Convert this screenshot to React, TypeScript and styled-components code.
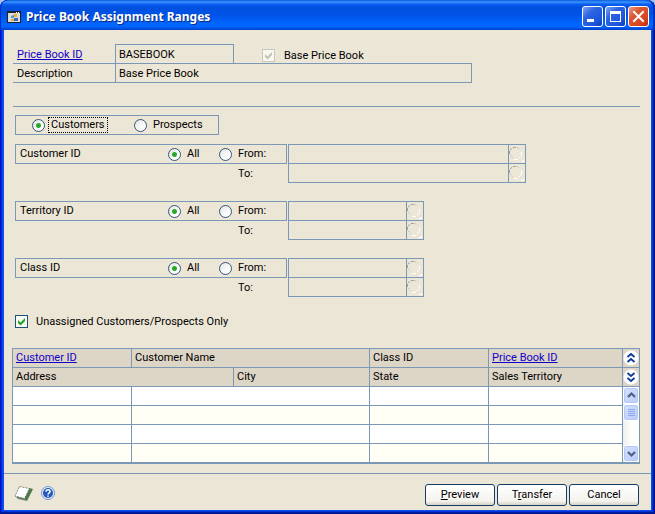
import React from "react";
import styled, { createGlobalStyle, css } from "styled-components";

const face = "#ece6d6";
const line = "#7b98b6";
const head = "#ddd5c6";

const GlobalStyle = createGlobalStyle`
  *, *::before, *::after { box-sizing: border-box; }
  body { margin: 0; background: #a9c2f3; }
  body, button, input { font-family: Roboto, "Liberation Sans", sans-serif; font-size: 11px; color: #000; }
`;

const Window = styled.main`
  display: flex;
  flex-direction: column;
  min-height: 100vh;
  padding: 0 4px 4px;
  border-radius: 8px 8px 0 0;
  background: #0b4fe6;
  box-shadow: inset -1px -1px #00138c, inset 1px 0 #0010c8, inset -2px -2px #001ea0,
    inset 2px 0 #0428dc, inset -3px -3px #0432e0, inset 3px 0 #0a48ea;
  overflow: hidden;
`;

const TitleBar = styled.header`
  display: flex;
  align-items: center;
  height: 30px;
  margin: 0 -4px;
  padding: 3px 6px 0 7px;
  border-radius: 8px 8px 0 0;
  background: linear-gradient(180deg, #0a5bdc 0, #3a94ff 7%, #0a5ff0 14%, #0050e0 24%, #0053e6 50%, #0066ff 80%, #0066ff 88%, #0040c8 100%);
  box-shadow: inset 1px 0 #0030d0, inset -2px 0 #0030c0;
`;

const Title = styled.h1`
  flex: 1;
  margin: 0 0 0 5px;
  color: #fff;
  font: bold 12px/18px "Noto Sans", sans-serif;
  text-shadow: 1px 1px #0a2a80;
  white-space: nowrap;
`;

const Captions = styled.div`
  display: flex;
  gap: 2px;
`;

const CaptionButton = styled.button<{ $close?: boolean }>`
  width: 21px;
  height: 21px;
  padding: 0;
  border: 1px solid #fff;
  border-radius: 3px;
  background: ${(p) =>
    p.$close
      ? "linear-gradient(135deg, #ee9a80, #dc5530 35%, #d8431c 75%, #b83010)"
      : "linear-gradient(135deg, #7ea6f4, #2c64e0 35%, #1c56dc 75%, #0c3cb8)"};
  svg { display: block; }
`;

const Content = styled.div`
  display: flex;
  flex: 1;
  flex-direction: column;
  background: ${face};
`;

const Form = styled.form`
  flex: 1;
  padding: 14px 11px 9px 8px;
`;

const HeaderRow = styled.div`
  display: flex;
  height: 19px;
  margin-left: 1px;
  &:last-of-type { height: 20px; }
`;

const labelCell = css`
  width: 102px;
  padding-left: 4px;
  border-bottom: 1px solid ${line};
  line-height: 21px;
`;

const HeaderLabel = styled.label`
  ${labelCell}
`;

const LinkLabel = styled.span`
  ${labelCell}
  border-bottom: 0;
  box-shadow: 0 1px ${line};
`;

const Link = styled.a`
  color: #1200c8;
  text-decoration: underline;
`;

const Field = styled.input<{ $wide?: boolean }>`
  width: ${(p) => (p.$wide ? "357px" : "119px")};
  padding: 0 3px;
  border: 1px solid ${line};
  border-bottom-width: ${(p) => (p.$wide ? "1px" : "0")};
  border-radius: 0;
  background: transparent;
  outline: 0;
`;

const CheckLabel = styled.label<{ $gap: number }>`
  display: inline-flex;
  align-items: center;
  gap: ${(p) => p.$gap}px;
  height: 14px;
`;

const BaseCheck = styled(CheckLabel)`
  height: 22px;
  margin-left: 28px;
`;

const checkMark = (c: string) =>
  `url("data:image/svg+xml,%3Csvg xmlns='http://www.w3.org/2000/svg' viewBox='0 0 11 11'%3E%3Cpath d='M2 4v3l2.5 2.5L9 5V2L4.500 6.500z' fill='%23${c}'/%3E%3C/svg%3E")`;

const CheckBox = styled.input`
  appearance: none;
  width: 13px;
  height: 13px;
  margin: 0;
  border: 1px solid #1d4f80;
  background: #f8f8f4 ${checkMark("21a121")} center / 11px 11px no-repeat;
  &:not(:checked) { background-image: none; }
  &:disabled {
    border-color: #c9c7ba;
    background: #f8f7f0 ${checkMark("c4c2b4")} center / 11px 11px no-repeat;
  }
`;

const Separator = styled.hr`
  height: 1px;
  margin: 23px 0 8px 1px;
  border: 0;
  background: ${line};
`;

const RadioBox = styled.div`
  display: flex;
  align-items: center;
  width: 204px;
  height: 20px;
  margin: 0 0 9px 3px;
  padding-left: 16px;
  border: 1px solid ${line};
`;

const RadioLabel = styled.label<{ $width: number }>`
  display: flex;
  align-items: center;
  gap: 3px;
  width: ${(p) => p.$width}px;
`;

const Radio = styled.input`
  appearance: none;
  width: 13px;
  height: 13px;
  margin: 0;
  border: 1px solid #35557c;
  border-radius: 50%;
  background: linear-gradient(135deg, #e2e2dc, #fff 70%);
  outline: 0;
  &:checked {
    background: radial-gradient(circle, #21a121 0, #2cab2c 2px, transparent 3px), linear-gradient(135deg, #e2e2dc, #fff 70%);
  }
`;

const RadioText = styled.span<{ $focus?: boolean }>`
  height: 16px;
  padding: 0 2px;
  border: 1px dotted ${(p) => (p.$focus ? "#000" : "transparent")};
  line-height: 14px;
  white-space: nowrap;
`;

const Range = styled.fieldset`
  display: flex;
  gap: 1px;
  margin: 0 0 18px 3px;
  padding: 0;
  border: 0;
  min-width: 0;
`;

const RangeLeft = styled.div`
  width: 272px;
`;

const RangeHead = styled.div`
  display: flex;
  align-items: center;
  height: 20px;
  padding-left: 4px;
  border: 1px solid ${line};
`;

const RangeName = styled.span`
  width: 148px;
  line-height: 18px;
`;

const ToLabel = styled.label`
  display: block;
  padding-left: 223px;
  line-height: 19px;
`;

const RangeFields = styled.div<{ $long?: boolean }>`
  width: ${(p) => (p.$long ? "238px" : "136px")};
  border: 1px solid ${line};
`;

const RangeRow = styled.div`
  display: flex;
  height: 18px;
  & + & {
    height: 19px;
    border-top: 1px solid ${line};
  }
`;

const RangeInput = styled.input`
  flex: 1;
  min-width: 0;
  padding: 0 3px;
  border: 0;
  background: transparent;
`;

const Lookup = styled.button`
  width: 17px;
  padding: 0;
  border: 0;
  border-left: 1px solid ${line};
  background: transparent;
  svg { display: block; }
`;

const Unassigned = styled.div`
  display: flex;
  margin: -1px 0 20px 3px;
`;

const Table = styled.table`
  width: 100%;
  border-collapse: collapse;
  table-layout: fixed;
  border-bottom: 2px solid ${line};
`;

const Col = styled.col<{ $w?: number }>`
  width: ${(p) => (p.$w ? `${p.$w}px` : "auto")};
`;

const Th = styled.th`
  height: 19px;
  padding: 0 3px;
  border: 1px solid ${line};
  background: ${head};
  font-weight: normal;
  line-height: 18px;
  text-align: left;
  white-space: nowrap;
`;

const ToolTh = styled(Th)`
  padding: 0;
`;

const BodyRow = styled.tr`
  background: #fff;
  &:nth-child(even) { background: #fffff5; }
`;

const Td = styled.td`
  height: 19px;
  padding: 0;
  border: 1px solid ${line};
`;

const Scroll = styled.div`
  display: flex;
  flex-direction: column;
  height: 75px;
  background: linear-gradient(90deg, #eeedf0, #fefefb 50%);
`;

const IconButton = styled.button`
  display: block;
  width: 100%;
  height: 18px;
  padding: 0;
  border: 0;
  background: transparent;
  svg { display: block; margin: auto; }
`;

const ScrollButton = styled(IconButton)`
  height: 17px;
  border: 1px solid #fff;
  border-radius: 3px;
  background: linear-gradient(135deg, #d5e1fd, #b8ccf8);
  box-shadow: inset 0 0 0 1px #b5c8f5;
  &:last-child { margin-top: auto; }
`;

const Footer = styled.footer`
  display: flex;
  align-items: flex-start;
  padding: 10px 12px 4px 10px;
  border-top: 1px solid ${line};
`;

const FooterIcons = styled.div`
  display: flex;
  flex: 1;
  gap: 7px;
`;

const SmallTool = styled.button`
  width: 20px;
  height: 18px;
  padding: 0;
  border: 0;
  background: transparent;
  svg { display: block; }
`;

const Actions = styled.div`
  display: flex;
  gap: 2px;
`;

const Action = styled.button`
  width: 70px;
  height: 22px;
  padding: 0;
  border: 1px solid #123c66;
  border-radius: 3px;
  background: linear-gradient(#fff, #f4f3ee 80%, #d8d2c6);
  line-height: 20px;
`;

const LookupIcon = () => (
  <svg width="16" height="18" viewBox="0 0 16 18" fill="none">
    <path d="M.5 9V5.500L4 2.500H8" stroke="#a39f92" strokeDasharray="3 1" />
    <path d="M8 2.500l3 1.500M1.500 10l2 3" stroke="#b0ac9f" strokeDasharray="1 2" />
    <path d="M12.500 7v3.500M5 14.500h4M10 13l2-2M12 16.500h3M14.500 15v2" stroke="#fffef8" />
  </svg>
);

const Chevrons = ({ down }: { down?: boolean }) => (
  <svg width="16" height="18" viewBox="0 0 16 18" fill="none">
    <circle cx="8" cy="9" r="7.500" fill="#fff" />
    <path
      d={down ? "M4.500 5L8 8l3.500-3M4.500 10L8 13l3.500-3" : "M4.500 8L8 5l3.500 3M4.500 13L8 10l3.500 3"}
      stroke="#0c3a9c"
      strokeWidth="1.800"
    />
  </svg>
);

const ranges = [
  { name: "Customer ID", key: "customer", long: true },
  { name: "Territory ID", key: "territory" },
  { name: "Class ID", key: "class" },
];

function RangeGroup({ name, id, long }: { name: string; id: string; long?: boolean }) {
  return (
    <Range aria-label={name}>
      <RangeLeft>
        <RangeHead>
          <RangeName>{name}</RangeName>
          <RadioLabel $width={51}>
            <Radio type="radio" name={id} defaultChecked />
            <RadioText>All</RadioText>
          </RadioLabel>
          <RadioLabel $width={60}>
            <Radio type="radio" name={id} />
            <RadioText>From:</RadioText>
          </RadioLabel>
        </RangeHead>
        <ToLabel htmlFor={`${id}-to`}>To:</ToLabel>
      </RangeLeft>
      <RangeFields $long={long}>
        {["from", "to"].map((end) => (
          <RangeRow key={end}>
            <RangeInput id={`${id}-${end}`} aria-label={`${name} ${end}`} disabled />
            <Lookup type="button" aria-label={`Look up ${name} ${end}`} disabled>
              <LookupIcon />
            </Lookup>
          </RangeRow>
        ))}
      </RangeFields>
    </Range>
  );
}

export default function App() {
  return (
    <>
      <GlobalStyle />
      <Window>
        <TitleBar>
          <svg width="14" height="12" viewBox="0 0 14 12" aria-hidden="true">
            <path fill="#20202c" d="M0 0h14v12H0z" />
            <path fill="#dcdcdc" d="M1 2h12v9H1z" />
            <path fill="#fff" d="M9 1h1v1H9zM11 1h1v1h-1z" />
            <path fill="#4b9ac8" d="M4 5l3-1v3H4z" />
            <path fill="#e4b030" d="M7 3h3v3H7zM4 8h3v2H4z" />
            <path fill="#3b68b0" d="M7 7h4v3H7z" />
          </svg>
          <Title>Price Book Assignment Ranges</Title>
          <Captions>
            <CaptionButton aria-label="Minimize">
              <svg width="19" height="19"><path d="M4 12h7v3H4z" fill="#fff" /></svg>
            </CaptionButton>
            <CaptionButton aria-label="Maximize">
              <svg width="19" height="19"><path d="M4 4h11v11H4zM5 7v7h9V7z" fill="#fff" fillRule="evenodd" /></svg>
            </CaptionButton>
            <CaptionButton $close aria-label="Close">
              <svg width="19" height="19"><path d="M5 5l9 9M14 5l-9 9" stroke="#fff" strokeWidth="2" strokeLinecap="square" /></svg>
            </CaptionButton>
          </Captions>
        </TitleBar>
        <Content>
          <Form>
            <section>
              <HeaderRow>
                <LinkLabel><Link href="#book">Price Book ID</Link></LinkLabel>
                <Field aria-label="Price Book ID" defaultValue="BASEBOOK" readOnly />
                <BaseCheck $gap={9}>
                  <CheckBox type="checkbox" defaultChecked disabled />
                  Base Price Book
                </BaseCheck>
              </HeaderRow>
              <HeaderRow>
                <HeaderLabel htmlFor="description">Description</HeaderLabel>
                <Field id="description" $wide defaultValue="Base Price Book" readOnly />
              </HeaderRow>
            </section>
            <Separator />
            <RadioBox role="radiogroup" aria-label="Assign to">
              <RadioLabel $width={102}>
                <Radio type="radio" name="kind" defaultChecked />
                <RadioText $focus>Customers</RadioText>
              </RadioLabel>
              <RadioLabel $width={80}>
                <Radio type="radio" name="kind" />
                <RadioText>Prospects</RadioText>
              </RadioLabel>
            </RadioBox>
            {ranges.map((r) => (
              <RangeGroup key={r.key} id={r.key} name={r.name} long={r.long} />
            ))}
            <Unassigned>
              <CheckLabel $gap={8}>
                <CheckBox type="checkbox" defaultChecked />
                Unassigned Customers/Prospects Only
              </CheckLabel>
            </Unassigned>
            <Table>
              <colgroup>
                <Col $w={119} />
                <Col $w={102} />
                <Col />
                <Col $w={119} />
                <Col $w={134} />
                <Col $w={17} />
              </colgroup>
              <thead>
                <tr>
                  <Th><Link href="#customer">Customer ID</Link></Th>
                  <Th colSpan={2}>Customer Name</Th>
                  <Th>Class ID</Th>
                  <Th><Link href="#pricebook">Price Book ID</Link></Th>
                  <ToolTh><IconButton type="button" aria-label="Hide details"><Chevrons /></IconButton></ToolTh>
                </tr>
                <tr>
                  <Th colSpan={2}>Address</Th>
                  <Th>City</Th>
                  <Th>State</Th>
                  <Th>Sales Territory</Th>
                  <ToolTh><IconButton type="button" aria-label="Show details"><Chevrons down /></IconButton></ToolTh>
                </tr>
              </thead>
              <tbody>
                {[0, 1, 2, 3].map((row) => (
                  <BodyRow key={row}>
                    <Td />
                    <Td colSpan={2} />
                    <Td />
                    <Td />
                    {row === 0 && (
                      <Td rowSpan={4}>
                        <Scroll>
                          <ScrollButton type="button" aria-label="Scroll up">
                            <svg width="13" height="15" fill="none"><path d="M3 9l3.500-3.500L10 9" stroke="#4d6185" strokeWidth="2.200" /></svg>
                          </ScrollButton>
                          <ScrollButton type="button" aria-label="Scroll thumb">
                            <svg width="13" height="15"><path d="M3 4.500h7M3 6.500h7M3 8.500h7M3 10.500h7" stroke="#8ba9ee" /></svg>
                          </ScrollButton>
                          <ScrollButton type="button" aria-label="Scroll down">
                            <svg width="13" height="15" fill="none"><path d="M3 6l3.500 3.500L10 6" stroke="#4d6185" strokeWidth="2.200" /></svg>
                          </ScrollButton>
                        </Scroll>
                      </Td>
                    )}
                  </BodyRow>
                ))}
              </tbody>
            </Table>
          </Form>
          <Footer>
            <FooterIcons>
              <SmallTool aria-label="Note">
                <svg width="20" height="18" viewBox="0 0 20 18">
                  <path d="M15 4l4 1-6 12-3-2z" fill="#4d7a4d" />
                  <path d="M1 12l9 2 3 3-9-2z" fill="#6c8468" />
                  <path d="M5.500 2.500L15.500 4.500 10.500 14.500 1 12z" fill="#fff" stroke="#5d6b5a" strokeWidth=".8" strokeDasharray="2 1" />
                </svg>
              </SmallTool>
              <SmallTool aria-label="Help">
                <svg width="16" height="18" viewBox="0 0 16 18">
                  <circle cx="7" cy="9" r="6.500" fill="#e6eefa" stroke="#7094cc" />
                  <circle cx="7" cy="9" r="5" fill="#2458b8" />
                  <path d="M5 7.800c0-3 4.400-2.600 4 0-.2 1.200-1.900 1.300-2 2.700M7 11.500v1.300" fill="none" stroke="#fff" strokeWidth="1.500" />
                </svg>
              </SmallTool>
            </FooterIcons>
            <Actions>
              <Action><u>P</u>review</Action>
              <Action>T<u>r</u>ansfer</Action>
              <Action>Cancel</Action>
            </Actions>
          </Footer>
        </Content>
      </Window>
    </>
  );
}
